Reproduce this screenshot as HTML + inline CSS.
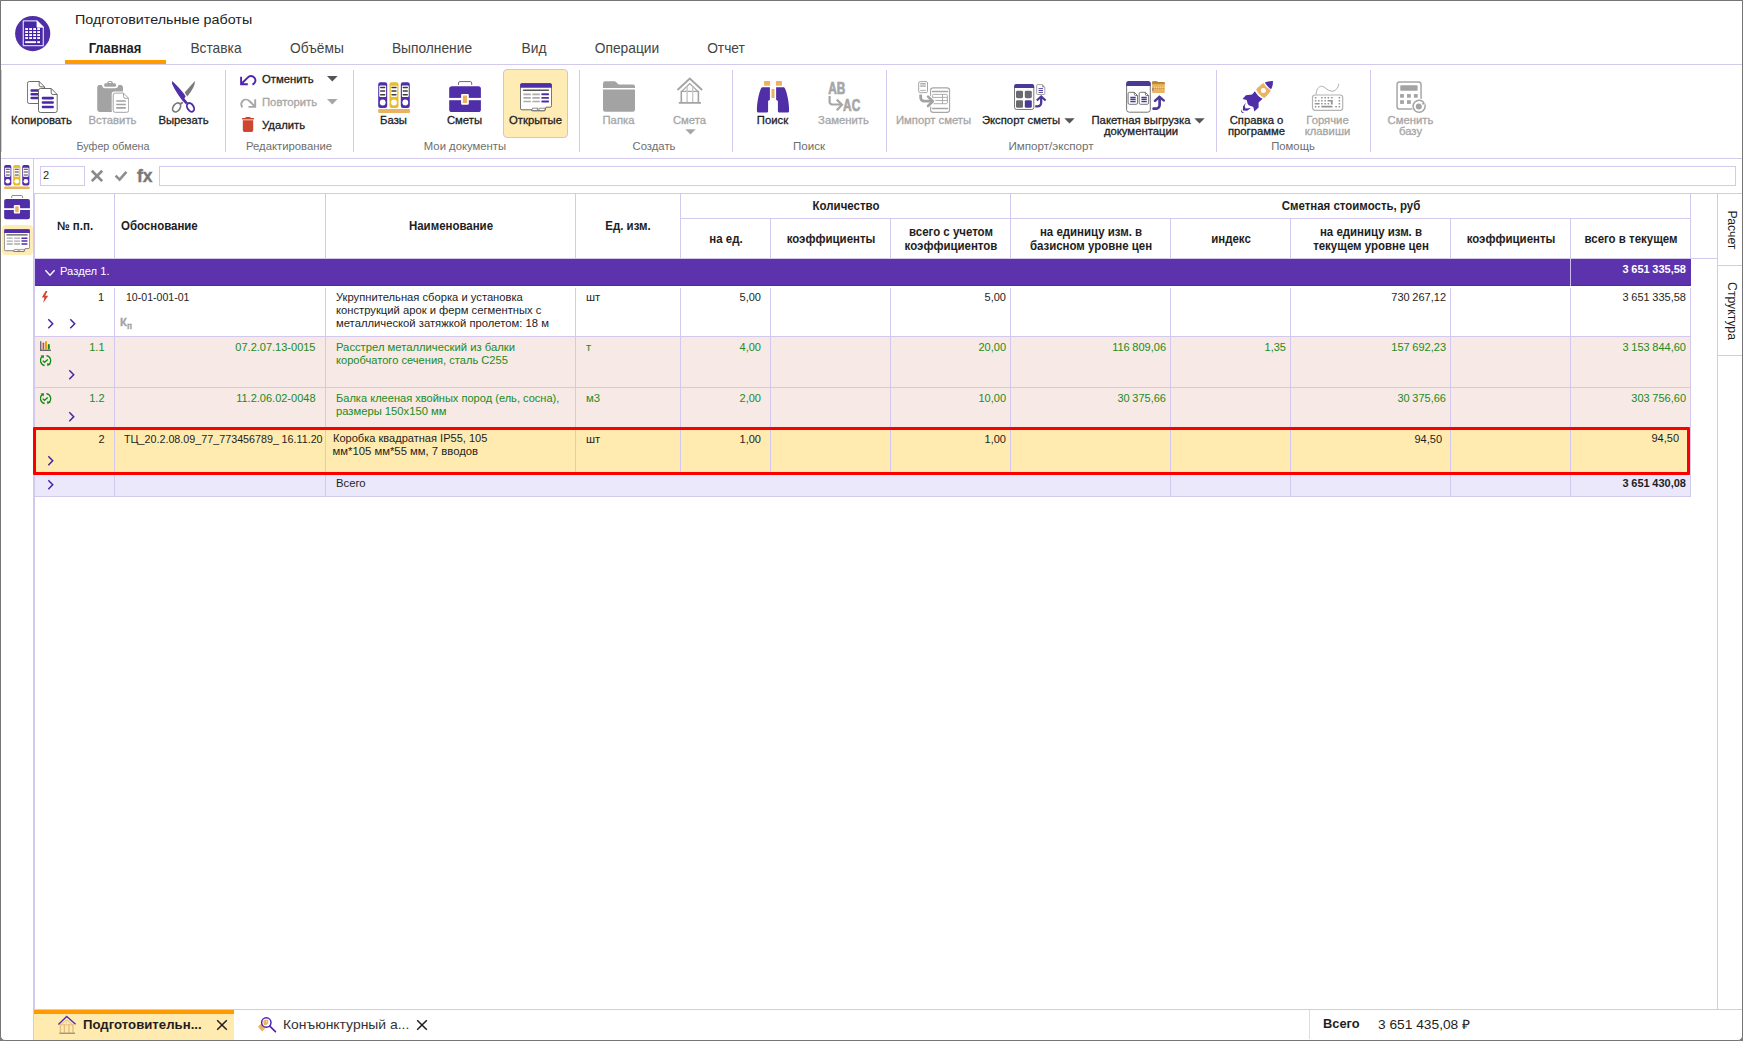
<!DOCTYPE html>
<html lang="ru">
<head>
<meta charset="utf-8">
<title>Подготовительные работы</title>
<style>
html,body{margin:0;padding:0;background:#7b7a78;}
body{width:1743px;height:1041px;overflow:hidden;font-family:"Liberation Sans",sans-serif;color:#1e1e1e;}
#win{position:absolute;left:0;top:0;width:1741px;height:1039px;border:1px solid #757575;border-radius:0 0 5px 5px;background:#fff;overflow:hidden;}
.abs{position:absolute;}
.t{position:absolute;white-space:nowrap;line-height:1;transform-origin:0 0;transform:scaleX(var(--sx,1));}
.t.cx{transform-origin:50% 0;transform:translateX(-50%) scaleX(var(--sx,1));}
.t.r{transform-origin:100% 0;transform:translateX(-100%) scaleX(var(--sx,1));}
.hl{position:absolute;height:1px;background:#d3c8ee;}
.vl{position:absolute;width:1px;background:#d3c8ee;}
#o{position:absolute;left:-1px;top:-1px;width:1743px;height:1041px;}
#title{left:75px;top:13px;font-size:13.5px;color:#222;--sx:1.06;}
.tab{font-size:14.5px;color:#444;top:41px;--sx:.95;}
.tab.act{font-weight:bold;color:#1e1e1e;--sx:.893;}
.rl{font-size:11.3px;color:#6e6e6e;top:141px;}
.bl{font-size:11.3px;color:#1e1e1e;-webkit-text-stroke:0.3px currentColor;text-align:center;line-height:11px;top:114.5px;--sx:1;}
.bl.dis{color:#a6a6a6;}
.sl{font-size:11.3px;-webkit-text-stroke:0.3px currentColor;color:#1e1e1e;--sx:1;}
.sl.dis{color:#a6a6a6;}
.ic{position:absolute;}
.th{font-size:12px;font-weight:bold;color:#1e1e1e;text-align:center;line-height:14px;--sx:.955;transform-origin:50% 50%;transform:translate(-50%,-50%) scaleX(var(--sx,1));}
.th.l{transform-origin:0 50%;transform:translate(0,-50%) scaleX(var(--sx,1));}
.c{font-size:11.3px;line-height:13px;}
.n{font-size:11px;line-height:13px;word-spacing:-0.4px;}
.g{color:#228b22;}
</style>
</head>
<body>
<div id="win"><div id="o">

<!-- ===== title / tabs ===== -->
<div class="abs" id="logo" style="left:15px;top:16px;width:36px;height:36px;">
<svg width="36" height="36" viewBox="0 0 36 36"><circle cx="17.700" cy="17.600" r="17.600" fill="#4f2ea8"/><path d="M8.300 4.900H22l6.300 6.300V29.700H8.300z" fill="#4527a4" stroke="#d6cdf0" stroke-width="1.300" stroke-linejoin="round"/><path d="M22 4.900v6.300h6.300z" fill="#fff" stroke="#fff" stroke-width="0.800" stroke-linejoin="round"/><g fill="#fff"><rect x="10.2" y="12.1" width="2.8" height="1.900"/><rect x="14.2" y="12.1" width="2.8" height="1.900"/><rect x="18.2" y="12.1" width="2.8" height="1.900"/><rect x="22.2" y="12.1" width="2.8" height="1.900"/><rect x="10.2" y="15.1" width="2.8" height="1.900"/><rect x="14.2" y="15.1" width="2.8" height="1.900"/><rect x="18.2" y="15.1" width="2.8" height="1.900"/><rect x="22.2" y="15.1" width="2.8" height="1.900"/><rect x="10.2" y="18.1" width="2.8" height="1.900"/><rect x="14.2" y="18.1" width="2.8" height="1.900"/><rect x="18.2" y="18.1" width="2.8" height="1.900"/><rect x="22.2" y="18.1" width="2.8" height="1.900"/><rect x="10.2" y="21.1" width="2.8" height="1.900"/><rect x="14.2" y="21.1" width="2.8" height="1.900"/><rect x="18.2" y="21.1" width="2.8" height="1.900"/><rect x="22.2" y="21.1" width="2.8" height="1.900"/><rect x="10.200" y="25.200" width="10.800" height="1.900"/><rect x="22.200" y="25.200" width="2.800" height="1.900"/></g></svg>
</div>
<div class="t" id="title">Подготовительные работы</div>
<div class="t cx tab act" style="left:115px;">Главная</div>
<div class="t cx tab" style="left:216px;">Вставка</div>
<div class="t cx tab" style="left:317px;">Объёмы</div>
<div class="t cx tab" style="left:432px;">Выполнение</div>
<div class="t cx tab" style="left:534px;">Вид</div>
<div class="t cx tab" style="left:627px;">Операции</div>
<div class="t cx tab" style="left:726px;">Отчет</div>
<div class="abs" style="left:65px;top:60px;width:101px;height:4px;background:#ff9a00;"></div>
<div class="hl" style="left:1px;top:64px;width:1741px;"></div>

<!-- ===== ribbon ===== -->
<div id="ribbon">
<div class="vl" style="left:1px;top:70px;height:82px;"></div>
<div class="vl" style="left:225px;top:70px;height:82px;"></div>
<div class="vl" style="left:353px;top:70px;height:82px;"></div>
<div class="vl" style="left:579px;top:70px;height:82px;"></div>
<div class="vl" style="left:732px;top:70px;height:82px;"></div>
<div class="vl" style="left:886px;top:70px;height:82px;"></div>
<div class="vl" style="left:1216px;top:70px;height:82px;"></div>
<div class="vl" style="left:1370px;top:70px;height:82px;"></div>
<!-- group 1 -->
<svg class="ic" style="left:27px;top:81px" width="32" height="32" viewBox="0 0 32 32">
<path d="M2.400 0.500h9.800l5.400 5.400v14.600a2 2 0 0 1-2 2H2.400a2 2 0 0 1-2-2V2.500a2 2 0 0 1 2-2z" fill="#fff" stroke="#5a5a5a" stroke-width="0.900"/>
<path d="M12.200 0.600v3.500a1.800 1.800 0 0 0 1.800 1.800h3.500" fill="none" stroke="#5a5a5a" stroke-width="0.900"/>
<g stroke="#4a28a6" stroke-width="2.500" stroke-linecap="round"><path d="M4.600 9.400h7M4.600 13.300h7M4.600 17.100h7"/></g>
<path d="M13.500 7.500h10.700l6 6v16a2 2 0 0 1-2 2H13.500a2 2 0 0 1-2-2V9.500a2 2 0 0 1 2-2z" fill="#fff" stroke="#5a5a5a" stroke-width="0.900"/>
<path d="M24.200 7.600v4a1.900 1.900 0 0 0 1.900 1.900h4" fill="none" stroke="#5a5a5a" stroke-width="0.900"/>
<g stroke="#4a28a6" stroke-width="2.700" stroke-linecap="round"><path d="M16 17.100h9.600M16 21.500h9.600M16 26h9.600"/></g>
</svg>
<div class="t cx bl" style="left:41.5px;">Копировать</div>

<svg class="ic" style="left:97px;top:81px" width="32" height="32" viewBox="0 0 32 32">
<path d="M2.600 4H4.800C5.400 6 6.400 7.300 8 7.300H18.400C20 7.300 21 6 21.500 4H23.600a2.400 2.400 0 0 1 2.400 2.400V28.600a2.400 2.400 0 0 1-2.400 2.400H2.600a2.400 2.400 0 0 1-2.400-2.400V6.400a2.400 2.400 0 0 1 2.400-2.400z" fill="#a3a3a3"/>
<path d="M8.600 2.200h1.600c.4-1.400 1-2.200 2-2.200h1.800c1 0 1.600.8 2 2.200h1.600a1.500 1.500 0 0 1 1.500 1.500v.6a1.500 1.500 0 0 1-1.500 1.500H8.600a1.500 1.500 0 0 1-1.500-1.500v-.6a1.500 1.500 0 0 1 1.500-1.500z" fill="#a3a3a3"/>
<rect x="11.700" y="1" width="2.600" height="1.100" rx="0.500" fill="#fff"/>
<rect x="14.700" y="10.500" width="17.300" height="21.500" rx="2.800" fill="#fff"/>
<path d="M18.200 12.100h8.300l5.200 5.200v12a2 2 0 0 1-2 2H18.200a2 2 0 0 1-2-2V14.100a2 2 0 0 1 2-2z" fill="#fff" stroke="#a3a3a3" stroke-width="1"/>
<path d="M26.500 12.200v3.400a1.700 1.700 0 0 0 1.700 1.700h3.400" fill="none" stroke="#a3a3a3" stroke-width="1"/>
<g stroke="#a3a3a3" stroke-width="1.700"><path d="M19.200 20h9.600M19.200 23.500h9.600M19.200 26.900h9.600"/></g>
</svg>
<div class="t cx bl dis" style="left:112.5px;">Вставить</div>

<svg class="ic" style="left:167px;top:81px" width="32" height="32" viewBox="0 0 32 32">
<path d="M27.800 0.100C28.400 3.600 25 10.200 20.200 15.400L17.700 11.600z" fill="#7a7a7a"/>
<path d="M5.200 0L9.500 4.200 13.400 8.500 17.200 13.100 18.600 15.400 17.400 17.600 20.800 21.600 18.800 23.200 14.900 18.900 11.500 14.200 7.600 8.100 5 2.700z" fill="#4f2ea8"/>
<ellipse cx="9.600" cy="26.400" rx="3.400" ry="4.900" transform="rotate(36 9.600 26.400)" fill="none" stroke="#7a7a7a" stroke-width="1.700"/>
<path d="M12.400 22.500l2.800-2.100 1.100 1.500-2.500 2z" fill="#7a7a7a"/>
<ellipse cx="23.500" cy="26.400" rx="3.100" ry="4.700" transform="rotate(-32 23.500 26.400)" fill="none" stroke="#4f2ea8" stroke-width="1.900"/>
</svg>
<div class="t cx bl" style="left:183.500px;">Вырезать</div>
<div class="t cx rl" style="left:112.700px;--sx:.952;">Буфер обмена</div>

<!-- group 2 -->
<svg class="ic" style="left:239px;top:73px" width="18" height="14" viewBox="0 0 18 14">
<path d="M2.100 3.800V11.200H8.800M2.300 11L8.900 4.400" fill="none" stroke="#4a25b0" stroke-width="1.900"/>
<path d="M8.700 4.600A4.350 4.350 0 1 1 13.400 11.500" fill="none" stroke="#4a25b0" stroke-width="1.900"/>
</svg>
<div class="t sl" style="left:262px;top:74px;">Отменить</div>
<svg class="ic" style="left:327px;top:76px" width="11" height="6" viewBox="0 0 11 6"><path d="M0 0.100h10.600L5.300 5.400z" fill="#555"/></svg>

<svg class="ic" style="left:239px;top:96px" width="18" height="14" viewBox="0 0 18 14">
<path d="M16.200 3.300V10.900H9.500M16 10.700L10.400 5" fill="none" stroke="#a6a6a6" stroke-width="1.900"/>
<path d="M10.400 5.200A4.400 4.400 0 1 0 3.400 11.300" fill="none" stroke="#a6a6a6" stroke-width="1.900"/>
</svg>
<div class="t sl dis" style="left:262px;top:97px;">Повторить</div>
<svg class="ic" style="left:327px;top:99px" width="11" height="6" viewBox="0 0 11 6"><path d="M0 0.100h10.600L5.300 5.400z" fill="#a6a6a6"/></svg>

<svg class="ic" style="left:241px;top:117px" width="14" height="15" viewBox="0 0 14 15">
<path d="M1.100 0.900h3l.8-.8h4.200l.8.800h3v1.600H1.100z" fill="#cd4630"/>
<path d="M1.800 3.200h10.400v10a1.700 1.700 0 0 1-1.700 1.700H3.500a1.700 1.700 0 0 1-1.700-1.700z" fill="#cd4630"/>
</svg>
<div class="t sl" style="left:262px;top:120px;">Удалить</div>
<div class="t cx rl" style="left:289px;">Редактирование</div>

<!-- group 3: Мои документы -->
<svg class="ic" style="left:378px;top:81px" width="33" height="32" viewBox="0 0 33 32">
<g transform="translate(0 0)">
<rect x="0.200" y="1.200" width="9" height="25.700" rx="2.200" fill="#4f2ea8"/>
<rect x="1.300" y="4.600" width="6.800" height="11.400" rx="1" fill="#fff"/>
<rect x="1.800" y="4.900" width="5.800" height="10.800" rx="0.800" fill="#fff"/>
<path d="M2.700 6.500h4M2.700 10h4M2.700 13.700h4" stroke="#3c3c3c" stroke-width="1.400" stroke-linecap="round"/>
<circle cx="4.700" cy="21.500" r="2.900" fill="#fff"/>
</g>
<g transform="translate(11.3 0)">
<rect x="0.200" y="1.200" width="9" height="25.700" rx="2.200" fill="#e8bd27"/>
<rect x="1.300" y="4.600" width="6.800" height="11.400" rx="1" fill="#f5e08c"/>
<rect x="1.800" y="4.900" width="5.800" height="10.800" rx="0.800" fill="#fff"/>
<path d="M2.700 6.500h4M2.700 10h4M2.700 13.700h4" stroke="#3c3c3c" stroke-width="1.400" stroke-linecap="round"/>
<circle cx="4.700" cy="21.500" r="2.900" fill="#fff"/>
</g>
<g transform="translate(22.6 0)">
<rect x="0.200" y="1.200" width="9" height="25.700" rx="2.200" fill="#4f2ea8"/>
<rect x="1.300" y="4.600" width="6.800" height="11.400" rx="1" fill="#fff"/>
<rect x="1.800" y="4.900" width="5.800" height="10.800" rx="0.800" fill="#fff"/>
<path d="M2.700 6.500h4M2.700 10h4M2.700 13.700h4" stroke="#3c3c3c" stroke-width="1.400" stroke-linecap="round"/>
<circle cx="4.700" cy="21.500" r="2.900" fill="#fff"/>
</g>
<rect x="0.200" y="28.100" width="31.800" height="3.800" rx="1" fill="#e9b361"/>
</svg>
<div class="t cx bl" style="left:393.500px;">Базы</div>

<svg class="ic" style="left:449px;top:81px" width="32" height="32" viewBox="0 0 32 32">
<path d="M9.500 3.900V2a1.400 1.400 0 0 1 1.400-1.400h10.400a1.400 1.400 0 0 1 1.400 1.400v1.900" fill="none" stroke="#6a6a6a" stroke-width="1"/>
<rect x="0.200" y="5.200" width="31.700" height="25.800" rx="2.600" fill="#4f2ea8"/>
<rect x="0" y="16.900" width="32" height="2.300" fill="#fff"/>
<rect x="12.100" y="12.900" width="7.700" height="10.800" rx="1.200" fill="#fff"/>
<rect x="13.800" y="14.400" width="4.300" height="7.600" rx="0.500" fill="#e9b361"/>
</svg>
<div class="t cx bl" style="left:464.500px;">Сметы</div>

<div class="abs" style="left:503px;top:69px;width:63px;height:67px;border:1px solid #cdc1ee;border-radius:4px;background:#ffecb5;"></div>
<svg class="ic" style="left:520px;top:83px" width="32" height="29" viewBox="0 0 32 29">
<path d="M2 0.600h28a1.600 1.600 0 0 1 1.600 1.600V22.600a1.600 1.600 0 0 1-1.600 1.600h-4l-1.200 3.600H12.600l-.6-1H2A1.600 1.600 0 0 1 .4 25.200V2.200A1.600 1.600 0 0 1 2 .6z" fill="#fff" stroke="#5a5a5a" stroke-width="0.900"/>
<path d="M2 0.200h28a1.800 1.800 0 0 1 1.800 1.800v2.800H.2V2A1.800 1.800 0 0 1 2 .2z" fill="#4f2ea8"/>
<path d="M3.600 7.300h24.800" stroke="#555" stroke-width="1.500" stroke-linecap="round"/>
<g stroke="#ababab" stroke-width="1.700"><path d="M3.400 11.300h7.400M12.400 11.300h7.400M3.400 14.900h7.400M12.400 14.900h7.400M3.400 18.500h7.400M12.400 18.500h7.400"/></g>
<g stroke="#4f2ea8" stroke-width="1.900" stroke-linecap="round"><path d="M22.200 11.300h6M22.200 14.900h6M22.200 18.500h6"/></g>
<path d="M11.600 27.600l1-2.400h5.400l-.8 2.400zM18.600 27.600l.8-2.400h6l-1 2.400z" fill="#fff" stroke="#5a5a5a" stroke-width="0.700"/>
</svg>
<div class="t cx bl" style="left:535.500px;">Открытые</div>
<div class="t cx rl" style="left:465px;">Мои документы</div>

<!-- group 4: Создать -->
<svg class="ic" style="left:603px;top:81px" width="32" height="31" viewBox="0 0 32 31">
<path d="M0 2.400A2.200 2.200 0 0 1 2.200 .2h8.600c1.400 0 2.200.6 3.200 1.800s1.600 1.600 3 1.600H30a2 2 0 0 1 2 2V6.900H0z" fill="#a3a3a3"/>
<path d="M0 8.500h32v20a2.200 2.200 0 0 1-2.200 2.200H2.200A2.200 2.200 0 0 1 0 28.500z" fill="#a3a3a3"/>
</svg>
<div class="t cx bl dis" style="left:618.500px;">Папка</div>

<svg class="ic" style="left:676px;top:77px" width="28" height="28" viewBox="0 0 28 28">
<path d="M1.500 13L13.800 1.500 26.100 13" fill="none" stroke="#a3a3a3" stroke-width="1.800"/>
<path d="M5.400 14.600L13.800 6.600l8.400 8" fill="none" stroke="#a3a3a3" stroke-width="1.300"/>
<path d="M5 14.400h17.600" stroke="#a3a3a3" stroke-width="1.300"/>
<path d="M5.300 14v11.400M22.400 14v11.400" stroke="#a3a3a3" stroke-width="1.600"/>
<path d="M11.100 9.600v15.600M16.700 9.600v15.600" stroke="#c9c9c9" stroke-width="1.500"/>
<path d="M2.800 25.900h22.200" stroke="#a3a3a3" stroke-width="1.800"/>
</svg>
<div class="t cx bl dis" style="left:689.500px;">Смета</div>
<svg class="ic" style="left:685px;top:129px" width="11" height="6" viewBox="0 0 11 6"><path d="M0.300 0.200h10.400L5.500 5.400z" fill="#a6a6a6"/></svg>
<div class="t cx rl" style="left:654px;">Создать</div>

<!-- group 5: Поиск -->
<svg class="ic" style="left:756px;top:81px" width="34" height="32" viewBox="0 0 34 32">
<rect x="8.100" y="0" width="6" height="4.700" fill="#e9b361"/>
<rect x="19.900" y="0" width="6" height="4.700" fill="#e9b361"/>
<rect x="15.500" y="8" width="3" height="9" fill="#e9b361"/>
<path d="M6.800 6.200h7.100V18.800l-1.800 1.100V30a1.500 1.500 0 0 1-1.500 1.500H2.400A1.500 1.500 0 0 1 .9 30C.9 21 2.800 12.600 5 7.600c.4-.9 1-1.400 1.800-1.400z" fill="#4f2ea8"/>
<path d="M27.200 6.200h-7.100V18.800l1.800 1.100V30a1.500 1.500 0 0 0 1.500 1.500h8.200a1.500 1.500 0 0 0 1.500-1.500C33.100 21 31.200 12.600 29 7.600c-.4-.9-1-1.400-1.800-1.400z" fill="#4f2ea8"/>
</svg>
<div class="t cx bl" style="left:772.500px;">Поиск</div>

<svg class="ic" style="left:827px;top:81px" width="36" height="32" viewBox="0 0 36 32">
<text transform="translate(1.300 12.700) scale(0.730 1)" font-family="Liberation Sans, sans-serif" font-weight="bold" font-size="16.200" fill="#a6a6a6" stroke="#a6a6a6" stroke-width="0.700">AB</text>
<text transform="translate(16.100 29.700) scale(0.730 1)" font-family="Liberation Sans, sans-serif" font-weight="bold" font-size="16.200" fill="#a6a6a6" stroke="#a6a6a6" stroke-width="0.700">AC</text>
<path d="M2.600 15V20.800a2.700 2.700 0 0 0 2.700 2.700h9.200" fill="none" stroke="#a6a6a6" stroke-width="2.200"/>
<path d="M9.800 18.600l5.200 5.200-5.200 5.400" fill="none" stroke="#a6a6a6" stroke-width="2.200"/>
</svg>
<div class="t cx bl dis" style="left:843.500px;">Заменить</div>
<div class="t cx rl" style="left:809px;--sx:1.025;">Поиск</div>

<!-- group 6: Импорт/экспорт -->
<svg class="ic" style="left:917px;top:81px" width="34" height="32" viewBox="0 0 34 32">
<rect x="1.700" y="0.600" width="8.800" height="11" rx="1.400" fill="#fff" stroke="#a6a6a6" stroke-width="1"/>
<rect x="3.200" y="2.800" width="5.600" height="2.200" fill="#d4d4d4"/>
<path d="M3.200 2.500h5.600M3.200 5.300h5.600M3.200 9.400h5.600" stroke="#a6a6a6" stroke-width="0.900"/>
<rect x="13.600" y="6.900" width="19" height="24.500" rx="2.600" fill="#fff" stroke="#a6a6a6" stroke-width="1.100"/>
<path d="M15.600 10.600h15M15.600 27.500h15" stroke="#a6a6a6" stroke-width="1.500" stroke-linecap="round"/>
<rect x="15.600" y="13.400" width="14.800" height="9.300" rx="1.200" fill="none" stroke="#a6a6a6" stroke-width="0.900"/>
<path d="M15.600 16.400h14.800M17.600 19.500h12.800M25.500 13.400v9.300" stroke="#a6a6a6" stroke-width="0.900"/>
<path d="M3.700 13.400v3.400a3.400 3.400 0 0 0 3.400 3.400h8.600" fill="none" stroke="#fff" stroke-width="4.600"/>
<path d="M11 15.600l4.900 4.600-4.900 4.800" fill="none" stroke="#fff" stroke-width="4.400" stroke-linecap="round"/>
<path d="M3.700 13.400v3.400a3.400 3.400 0 0 0 3.400 3.400h8" fill="none" stroke="#a3a3a3" stroke-width="2.800"/>
<path d="M11 15.600l4.900 4.600-4.900 4.800" fill="none" stroke="#a3a3a3" stroke-width="2.600" stroke-linecap="round" stroke-linejoin="round"/>
</svg>
<div class="t cx bl dis" style="left:933.500px;">Импорт сметы</div>

<svg class="ic" style="left:1014px;top:84px" width="33" height="26" viewBox="0 0 33 26">
<rect x="0.500" y="0.500" width="19.300" height="25" rx="2" fill="#fff" stroke="#6a6a6a" stroke-width="0.900"/>
<path d="M2.400 0.100h15.500a2.200 2.200 0 0 1 2.200 2.200v1.600H.2V2.300A2.200 2.200 0 0 1 2.400 .1z" fill="#4c3897"/>
<rect x="2" y="6.800" width="7" height="7.400" rx="1.400" fill="#6b6a70"/>
<rect x="10.800" y="6.800" width="7" height="7.400" rx="1.400" fill="#6b6a70"/>
<rect x="2" y="16.200" width="7" height="7.600" rx="1.400" fill="#6b6a70"/>
<rect x="10.800" y="16.200" width="7" height="7.600" rx="1.400" fill="#4c3897"/>
<path d="M23.600 0.600h4.600l2.600 2.600v6.400a.9.900 0 0 1-.9.900h-6.300a.9.900 0 0 1-.9-.9V1.500a.9.900 0 0 1 .9-.9z" fill="#fff" stroke="#8a8a8a" stroke-width="0.800"/>
<path d="M28.200 0.600v2.600h2.600z" fill="#8a8a8a"/>
<path d="M24.600 4.600h4.400M24.600 6.500h4.400M24.600 8.400h4.400" stroke="#5a46a8" stroke-width="1"/>
<path d="M21.200 22.400h2.400a3.600 3.600 0 0 0 3.600-3.600V13.500" fill="none" stroke="#4c3897" stroke-width="2.300"/>
<path d="M22.800 16.600l4.400-4.200 4.400 4.200" fill="none" stroke="#4c3897" stroke-width="2.100"/>
</svg>
<div class="t cx bl" style="left:1021px;">Экспорт сметы</div>
<svg class="ic" style="left:1064px;top:118px" width="11" height="6" viewBox="0 0 11 6"><path d="M0.300 0.200h10.400L5.500 5.400z" fill="#555"/></svg>

<svg class="ic" style="left:1126px;top:81px" width="40" height="32" viewBox="0 0 40 32">
<rect x="0.600" y="0.500" width="23.700" height="30.700" rx="2.600" fill="#fff" stroke="#666" stroke-width="0.900"/>
<path d="M2.800 0.100h19.300a2.600 2.600 0 0 1 2.600 2.600v2.200H.2V2.700A2.600 2.600 0 0 1 2.800 .1z" fill="#4c3897"/>
<path d="M3.5 11.300h4.800l3.200 3.200v7.400a1.400 1.400 0 0 1-1.400 1.400H3.5a1.400 1.400 0 0 1-1.400-1.400V12.700a1.400 1.400 0 0 1 1.400-1.400z" fill="#fff" stroke="#666" stroke-width="0.900"/>
<path d="M8.3 11.400v1.800a1.300 1.300 0 0 0 1.300 1.300h1.800" fill="none" stroke="#666" stroke-width="0.900"/>
<path d="M4.300000000000001 16.500h5.400M4.300000000000001 18.500h5.400M4.300000000000001 20.600h5.400" stroke="#4c3897" stroke-width="1.300"/>
<path d="M14.6 11.300h4.800l3.200 3.200v7.400a1.400 1.400 0 0 1-1.400 1.400H14.6a1.400 1.400 0 0 1-1.400-1.400V12.700a1.400 1.400 0 0 1 1.400-1.400z" fill="#fff" stroke="#666" stroke-width="0.900"/>
<path d="M19.4 11.400v1.800a1.300 1.300 0 0 0 1.300 1.300h1.800" fill="none" stroke="#666" stroke-width="0.900"/>
<path d="M15.399999999999999 16.500h5.400M15.399999999999999 18.500h5.400M15.399999999999999 20.600h5.400" stroke="#4c3897" stroke-width="1.300"/>
<path d="M26.100 1.400a1.200 1.200 0 0 1 1.200-1.200h3c.8 0 1.200.4 1.600.9h5.800a1.100 1.100 0 0 1 1.100 1.100V11a.9.900 0 0 1-.9.900H27a.9.900 0 0 1-.9-.9z" fill="#ebb560"/>
<path d="M26.100 1.400a1.200 1.200 0 0 1 1.200-1.200h3c.8 0 1.200.4 1.600.9h5.800a1.100 1.100 0 0 1 1.100 1.100v.9H26.100z" fill="#b08430"/>
<path d="M26.100 3.100h12.700" stroke="#d9a64e" stroke-width="0.800"/>
<path d="M26.300 6.500h12.400" stroke="#f5f0e6" stroke-width="0.800" stroke-dasharray="0.900 1.100"/>
<path d="M27.300 7.300h11.400" stroke="#7d7d86" stroke-width="0.800" stroke-dasharray="0.900 1.100"/>
<rect x="26.100" y="6.600" width="1.400" height="3.200" fill="#8a8a92"/>
<path d="M27.600 27.700h2.200a3.800 3.800 0 0 0 3.800-3.800V16.600" fill="none" stroke="#4c3897" stroke-width="2.700" stroke-linecap="round"/>
<path d="M29 19.800L33.400 15.800 37.700 19.400" fill="none" stroke="#4c3897" stroke-width="2.500" stroke-linecap="round" stroke-linejoin="miter"/>
</svg>
<div class="t cx bl" style="left:1141px;">Пакетная выгрузка<br>документации</div>
<svg class="ic" style="left:1194px;top:118px" width="11" height="6" viewBox="0 0 11 6"><path d="M0.300 0.200h10.400L5.500 5.400z" fill="#555"/></svg>
<div class="t cx rl" style="left:1050.800px;--sx:1.028;">Импорт/экспорт</div>

<!-- group 7: Помощь -->
<svg class="ic" style="left:1240px;top:80px" width="34" height="34" viewBox="0 0 34 34">
<path d="M32.900 .9C30 .8 27 1.500 24.800 2.500 26.400 5.400 28.600 7.700 31.100 9.200 32.600 6.800 33.100 3.800 32.900 .9z" fill="#4f2ea8"/>
<path d="M23.600 3.100C20.800 4.800 18.200 7 16.100 9.500 17.800 13.200 20.800 16.200 24.400 17.900 27 15.800 29.200 13.200 30.900 10.200 28 8.800 25.200 6.200 23.600 3.100z" fill="#e9b361"/>
<circle cx="23.400" cy="10.400" r="2.500" fill="#fff"/>
<path d="M14.900 11.200C16.600 14.400 19.400 17.200 22.600 18.700L18.600 22.500V27.500L14.400 31.400 13.200 26.700C11.800 26.600 10.400 26.200 9.400 25.600 8.200 24.800 7.500 23.700 7.300 22.500L6.700 20 2.500 19.100 5.900 15.200 12.100 14.400z" fill="#4f2ea8"/>
<path d="M5.900 22.500L4.700 26 5.500 28.400 11 27.900 7.200 30.700 2.900 30.500 3 26.400z" fill="#4f2ea8"/>
<path d="M1.300 29C.8 30.600 1 32 1.700 32.600 2.600 33.200 3.800 33.200 4.800 32.900 3.400 32.600 2.400 32 1.900 31.200 1.500 30.600 1.300 29.800 1.300 29z" fill="#4f2ea8"/>
</svg>
<div class="t cx bl" style="left:1256.500px;">Справка о<br>программе</div>

<svg class="ic" style="left:1311px;top:82px" width="33" height="29" viewBox="0 0 33 29">
<path d="M5 12.800C5.200 8 7.400 4.200 10.500 4.200c3.300 0 5.500 4.600 10.200 5 3.400.2 6.400-2.600 7.100-7.500" fill="none" stroke="#a6a6a6" stroke-width="0.900"/>
<rect x="1.500" y="13" width="30.200" height="15.400" rx="2.600" fill="#fff" stroke="#b4b4b4" stroke-width="1.200"/>
<g fill="#959595"><rect x="3.75" y="14.95" width="1.7" height="1.5" rx="0.4"/><rect x="10.05" y="14.95" width="1.7" height="1.5" rx="0.4"/><rect x="13.35" y="14.95" width="1.7" height="1.5" rx="0.4"/><rect x="16.55" y="14.95" width="1.7" height="1.5" rx="0.4"/><rect x="20.05" y="14.95" width="1.7" height="1.5" rx="0.4"/><rect x="27.55" y="14.95" width="1.7" height="1.5" rx="0.4"/><rect x="3.75" y="18.05" width="1.7" height="1.5" rx="0.4"/><rect x="6.95" y="18.05" width="1.7" height="1.5" rx="0.4"/><rect x="10.05" y="18.05" width="1.7" height="1.5" rx="0.4"/><rect x="13.35" y="18.05" width="1.7" height="1.5" rx="0.4"/><rect x="27.55" y="18.05" width="1.7" height="1.5" rx="0.4"/><rect x="10.05" y="20.95" width="1.7" height="1.5" rx="0.4"/><rect x="13.35" y="20.95" width="1.7" height="1.5" rx="0.4"/><rect x="16.55" y="20.95" width="1.7" height="1.5" rx="0.4"/><rect x="27.55" y="20.95" width="1.7" height="1.5" rx="0.4"/><rect x="3.75" y="23.95" width="1.7" height="1.5" rx="0.4"/><rect x="6.95" y="23.95" width="1.7" height="1.5" rx="0.4"/><rect x="24.25" y="23.95" width="1.7" height="1.5" rx="0.4"/><rect x="27.55" y="23.95" width="1.7" height="1.5" rx="0.4"/><rect x="3.600" y="20.900" width="5.200" height="1.600" rx="0.800"/><rect x="10.200" y="23.800" width="11.400" height="1.800" rx="0.900"/><path d="M16.600 18h5.100v4.600h-1.800v-3h-3.300z"/></g>
</svg>
<div class="t cx bl dis" style="left:1327.500px;">Горячие<br>клавиши</div>
<div class="t cx rl" style="left:1293px;">Помощь</div>

<!-- group 8 -->
<svg class="ic" style="left:1396px;top:81px" width="32" height="32" viewBox="0 0 32 32">
<rect x="1.050" y="0.950" width="24" height="27.100" rx="2.600" fill="#fff" stroke="#a6a6a6" stroke-width="1.500"/>
<rect x="4.300" y="4.200" width="17.300" height="5.600" rx="0.900" fill="#a3a3a3"/>
<g fill="#a3a3a3"><rect x="4.100" y="13.100" width="3.800" height="3.600"/><rect x="11" y="13.100" width="3.800" height="3.600"/><rect x="17.900" y="13.100" width="3.800" height="3.600"/><rect x="4.100" y="19.200" width="3.800" height="3.700"/><rect x="11" y="19.200" width="3.800" height="3.700"/></g>
<circle cx="23.100" cy="25.200" r="7.600" fill="#fff"/>
<circle cx="23.100" cy="25.200" r="6" fill="none" stroke="#a3a3a3" stroke-width="1.500"/>
<circle cx="22.800" cy="25.400" r="3" fill="#a3a3a3"/>
<path d="M24.600 23.600l1.400-1.800 2.600-.2.400 2.400-2.200 1z" fill="#fff"/>
<path d="M27.800 20.400l.9 3.400-3.200-.6z" fill="#a3a3a3"/>
</svg>
<div class="t cx bl dis" style="left:1410.500px;">Сменить<br>базу</div>

</div>
<div class="hl" style="left:1px;top:158px;width:1741px;"></div>

<!-- ===== left sidebar ===== -->
<div class="vl" style="left:33px;top:159px;height:881px;"></div>
<svg class="ic" style="left:4px;top:163.5px" width="26.4" height="25.6" preserveAspectRatio="none" viewBox="0 0 33 32">
<g transform="translate(0 0)">
<rect x="0.200" y="1.200" width="9" height="25.700" rx="2.200" fill="#4f2ea8"/>
<rect x="1.300" y="4.600" width="6.800" height="11.400" rx="1" fill="#fff"/>
<rect x="1.800" y="4.900" width="5.800" height="10.800" rx="0.800" fill="#fff"/>
<path d="M2.700 6.500h4M2.700 10h4M2.700 13.700h4" stroke="#3c3c3c" stroke-width="1.400" stroke-linecap="round"/>
<circle cx="4.700" cy="21.500" r="2.900" fill="#fff"/>
</g>
<g transform="translate(11.3 0)">
<rect x="0.200" y="1.200" width="9" height="25.700" rx="2.200" fill="#e8bd27"/>
<rect x="1.300" y="4.600" width="6.800" height="11.400" rx="1" fill="#f5e08c"/>
<rect x="1.800" y="4.900" width="5.800" height="10.800" rx="0.800" fill="#fff"/>
<path d="M2.700 6.500h4M2.700 10h4M2.700 13.700h4" stroke="#3c3c3c" stroke-width="1.400" stroke-linecap="round"/>
<circle cx="4.700" cy="21.500" r="2.900" fill="#fff"/>
</g>
<g transform="translate(22.6 0)">
<rect x="0.200" y="1.200" width="9" height="25.700" rx="2.200" fill="#4f2ea8"/>
<rect x="1.300" y="4.600" width="6.800" height="11.400" rx="1" fill="#fff"/>
<rect x="1.800" y="4.900" width="5.800" height="10.800" rx="0.800" fill="#fff"/>
<path d="M2.700 6.500h4M2.700 10h4M2.700 13.700h4" stroke="#3c3c3c" stroke-width="1.400" stroke-linecap="round"/>
<circle cx="4.700" cy="21.500" r="2.900" fill="#fff"/>
</g>
<rect x="0.200" y="28.100" width="31.800" height="3.800" rx="1" fill="#e9b361"/>
</svg>
<svg class="ic" style="left:4px;top:195px" width="26" height="25" preserveAspectRatio="none" viewBox="0 0 32 32">
<path d="M9.500 3.900V2a1.400 1.400 0 0 1 1.400-1.400h10.400a1.400 1.400 0 0 1 1.400 1.400v1.900" fill="none" stroke="#6a6a6a" stroke-width="1"/>
<rect x="0.200" y="5.200" width="31.700" height="25.800" rx="2.600" fill="#4f2ea8"/>
<rect x="0" y="16.900" width="32" height="2.300" fill="#fff"/>
<rect x="12.100" y="12.900" width="7.700" height="10.800" rx="1.200" fill="#fff"/>
<rect x="13.800" y="14.400" width="4.300" height="7.600" rx="0.500" fill="#e9b361"/>
</svg>
<div class="abs" style="left:2px;top:225px;width:31px;height:30px;border-radius:4px;background:#ffecb5;"></div>
<svg class="ic" style="left:4px;top:229px" width="26" height="23.5" preserveAspectRatio="none" viewBox="0 0 32 29">
<path d="M2 0.600h28a1.600 1.600 0 0 1 1.600 1.600V22.600a1.600 1.600 0 0 1-1.600 1.600h-4l-1.200 3.600H12.600l-.6-1H2A1.600 1.600 0 0 1 .4 25.200V2.200A1.600 1.600 0 0 1 2 .6z" fill="#fff" stroke="#5a5a5a" stroke-width="0.900"/>
<path d="M2 0.200h28a1.800 1.800 0 0 1 1.800 1.800v2.800H.2V2A1.800 1.800 0 0 1 2 .2z" fill="#4f2ea8"/>
<path d="M3.600 7.300h24.800" stroke="#555" stroke-width="1.500" stroke-linecap="round"/>
<g stroke="#ababab" stroke-width="1.700"><path d="M3.400 11.300h7.400M12.400 11.300h7.400M3.400 14.900h7.400M12.400 14.900h7.400M3.400 18.500h7.400M12.400 18.500h7.400"/></g>
<g stroke="#4f2ea8" stroke-width="1.900" stroke-linecap="round"><path d="M22.200 11.300h6M22.200 14.900h6M22.200 18.500h6"/></g>
<path d="M11.600 27.600l1-2.400h5.400l-.8 2.400zM18.600 27.600l.8-2.400h6l-1 2.400z" fill="#fff" stroke="#5a5a5a" stroke-width="0.700"/>
</svg>

<!-- ===== formula bar ===== -->
<div class="abs" style="left:40px;top:166px;width:43px;height:18px;border:1px solid #d3c8ee;"></div>
<div class="t" style="left:43px;top:170px;font-size:11px;color:#1e1e1e;">2</div>
<svg class="ic" style="left:90px;top:169px" width="14" height="14" viewBox="0 0 14 14"><path d="M1.800 1.700l10.400 10.400M12.200 1.700L1.800 12.100" stroke="#8a8a8a" stroke-width="2.700"/></svg>
<svg class="ic" style="left:114px;top:169px" width="14" height="14" viewBox="0 0 14 14"><path d="M1.600 6.600l4 4 6.800-7.800" fill="none" stroke="#8f8f8f" stroke-width="2.700"/></svg>
<div class="t" style="left:137px;top:167.500px;font-size:17.500px;font-weight:bold;color:#787878;-webkit-text-stroke:0.400px #787878;--sx:1;">fx</div>
<div class="abs" style="left:159px;top:166px;width:1575px;height:18px;border:1px solid #d3c8ee;"></div>

<!-- ===== grid ===== -->
<div class="abs" style="left:35px;top:259px;width:1656px;height:27px;background:#5c33ad;"></div>
<div class="abs" style="left:35px;top:285px;width:1656px;height:1px;background:#5029a8;"></div>
<div class="abs" style="left:35px;top:337px;width:1655px;height:50px;background:#f6e9e6;"></div>
<div class="abs" style="left:35px;top:388px;width:1655px;height:39px;background:#f6e9e6;"></div>
<div class="abs" style="left:35px;top:430px;width:1653px;height:42px;background:#ffebb0;"></div>
<div class="abs" style="left:35px;top:475px;width:1655px;height:21px;background:#ece8fc;"></div>
<div class="hl" style="left:34px;top:193px;width:1684px;background:#d3c8ee;"></div>
<div class="hl" style="left:680px;top:218px;width:1010px;background:#d3c8ee;"></div>
<div class="hl" style="left:34px;top:258px;width:1684px;background:#d3c8ee;"></div>
<div class="hl" style="left:34px;top:336px;width:1657px;background:#d3c8ee;"></div>
<div class="hl" style="left:34px;top:387px;width:1657px;background:#d3c8ee;"></div>
<div class="hl" style="left:34px;top:496px;width:1657px;background:#d3c8ee;"></div>
<div class="vl" style="left:34px;top:193px;height:816px;background:#d3c8ee;"></div>
<div class="vl" style="left:114px;top:193px;height:65px;background:#d3c8ee;"></div>
<div class="vl" style="left:325px;top:193px;height:65px;background:#d3c8ee;"></div>
<div class="vl" style="left:575px;top:193px;height:65px;background:#d3c8ee;"></div>
<div class="vl" style="left:680px;top:193px;height:65px;background:#d3c8ee;"></div>
<div class="vl" style="left:1010px;top:193px;height:65px;background:#d3c8ee;"></div>
<div class="vl" style="left:1690px;top:193px;height:65px;background:#d3c8ee;"></div>
<div class="vl" style="left:770px;top:218px;height:40px;background:#d3c8ee;"></div>
<div class="vl" style="left:890px;top:218px;height:40px;background:#d3c8ee;"></div>
<div class="vl" style="left:1170px;top:218px;height:40px;background:#d3c8ee;"></div>
<div class="vl" style="left:1290px;top:218px;height:40px;background:#d3c8ee;"></div>
<div class="vl" style="left:1450px;top:218px;height:40px;background:#d3c8ee;"></div>
<div class="vl" style="left:1570px;top:218px;height:40px;background:#d3c8ee;"></div>
<div class="vl" style="left:114px;top:288px;height:208px;background:#d3c8ee;"></div>
<div class="vl" style="left:325px;top:288px;height:208px;background:#d3c8ee;"></div>
<div class="vl" style="left:575px;top:288px;height:187px;background:#d3c8ee;"></div>
<div class="vl" style="left:680px;top:288px;height:187px;background:#d3c8ee;"></div>
<div class="vl" style="left:770px;top:288px;height:187px;background:#d3c8ee;"></div>
<div class="vl" style="left:890px;top:288px;height:187px;background:#d3c8ee;"></div>
<div class="vl" style="left:1010px;top:288px;height:187px;background:#d3c8ee;"></div>
<div class="vl" style="left:1170px;top:288px;height:208px;background:#d3c8ee;"></div>
<div class="vl" style="left:1290px;top:288px;height:208px;background:#d3c8ee;"></div>
<div class="vl" style="left:1450px;top:288px;height:208px;background:#d3c8ee;"></div>
<div class="vl" style="left:1570px;top:288px;height:208px;background:#d3c8ee;"></div>
<div class="vl" style="left:1690px;top:288px;height:208px;background:#d3c8ee;"></div>
<div class="vl" style="left:1570px;top:259px;height:27px;background:#cbbcf0;"></div>
<div class="vl" style="left:1690px;top:259px;height:27px;background:#5c33ad;"></div>
<div class="t th" style="left:75px;top:226px;">№ п.п.</div>
<div class="t th l" style="left:121px;top:226px;">Обоснование</div>
<div class="t th" style="left:450.5px;top:226px;">Наименование</div>
<div class="t th" style="left:628px;top:226px;">Ед. изм.</div>
<div class="t th" style="left:846px;top:206px;">Количество</div>
<div class="t th" style="left:1351px;top:206px;">Сметная стоимость, руб</div>
<div class="t th" style="left:726px;top:239px;">на ед.</div>
<div class="t th" style="left:831px;top:239px;">коэффициенты</div>
<div class="t th" style="left:951px;top:239px;">всего с учетом<br>коэффициентов</div>
<div class="t th" style="left:1091px;top:239px;">на единицу изм. в<br>базисном уровне цен</div>
<div class="t th" style="left:1231px;top:239px;">индекс</div>
<div class="t th" style="left:1371px;top:239px;">на единицу изм. в<br>текущем уровне цен</div>
<div class="t th" style="left:1511px;top:239px;">коэффициенты</div>
<div class="t th" style="left:1631px;top:239px;">всего в текущем</div>
<svg class="ic" style="left:44px;top:268.600px" width="12" height="8" viewBox="0 0 12 8"><path d="M1.400 1.300L6 6.300l4.600-5" fill="none" stroke="#fff" stroke-width="1.400"/></svg>
<div class="t c" style="left:60px;top:265px;color:#fff;font-size:11.500px;--sx:.977;">Раздел 1.</div>
<div class="t n r" style="left:1686px;top:263px;color:#fff;font-weight:bold;">3 651 335,58</div>
<svg class="ic" style="left:41px;top:291px" width="8" height="12" viewBox="0 0 8 12"><path d="M4.600 0L0.800 6.600h2.600L2.200 12 7.200 4.800H4.200L6.400 0z" fill="#d2452f"/></svg>
<div class="t n r" style="left:104px;top:291px;">1</div>
<div class="t n" style="left:125.5px;top:291px;--sx:.96;">10-01-001-01</div>
<div class="t c" style="left:120px;top:316px;color:#a3a3a3;font-weight:bold;font-size:11.500px;--sx:.98;-webkit-text-stroke:0.300px #a3a3a3;">К<span style="font-size:8.500px;position:relative;top:2.500px;">п</span></div>
<svg class="ic" style="left:47px;top:318px" width="8" height="11" viewBox="0 0 8 11"><path d="M1.300 1.300l4.400 4.500L1.300 10.300" fill="none" stroke="#4527a0" stroke-width="1.500"/></svg>
<svg class="ic" style="left:69px;top:318px" width="8" height="11" viewBox="0 0 8 11"><path d="M1.300 1.300l4.400 4.500L1.300 10.300" fill="none" stroke="#4527a0" stroke-width="1.500"/></svg>
<div class="t c" style="left:336px;top:291px;--sx:0.991;">Укрупнительная сборка и установка</div>
<div class="t c" style="left:336px;top:304px;--sx:0.993;">конструкций арок и ферм сегментных с</div>
<div class="t c" style="left:336px;top:317px;--sx:0.996;">металлической затяжкой пролетом: 18 м</div>
<div class="t c" style="left:586px;top:291px;">шт</div>
<div class="t n r" style="left:761px;top:291px;">5,00</div>
<div class="t n r" style="left:1006px;top:291px;">5,00</div>
<div class="t n r" style="left:1446px;top:291px;">730 267,12</div>
<div class="t n r" style="left:1686px;top:291px;">3 651 335,58</div>
<svg class="ic" style="left:40px;top:341px" width="12" height="10" viewBox="0 0 12 10"><path d="M0.700 0.200v9h10.200" fill="none" stroke="#6a6a72" stroke-width="1.400"/><path d="M3.400 2.200v5.400" stroke="#d2452f" stroke-width="1.600" stroke-linecap="round"/><path d="M6 1.100v6.500" stroke="#e8a010" stroke-width="2" stroke-linecap="round"/><path d="M8.800 4v3.600" stroke="#128a12" stroke-width="2" stroke-linecap="round"/></svg>
<svg class="ic" style="left:40px;top:355px" width="12" height="12" viewBox="0 0 12 12"><path d="M4.600 10.500A5.100 5.100 0 0 1 2.300 1.600M6.400 0.600A5.100 5.100 0 0 1 9 9.400" fill="none" stroke="#128a12" stroke-width="1.300"/><path d="M0.500 0.500L4.100 0.300 3.500 3.400zM6.900 8.200L11 9 7.500 11.300z" fill="#128a12"/><path d="M2.700 5.600L4.500 7.300 7.800 4.400" fill="none" stroke="#128a12" stroke-width="1.300"/></svg>
<div class="t n r g" style="left:104.5px;top:341px;">1.1</div>
<div class="t n r g" style="left:315.5px;top:341px;">07.2.07.13-0015</div>
<svg class="ic" style="left:68px;top:369px" width="8" height="11" viewBox="0 0 8 11"><path d="M1.300 1.300l4.400 4.500L1.300 10.300" fill="none" stroke="#4527a0" stroke-width="1.500"/></svg>
<div class="t c g" style="left:336px;top:341px;--sx:0.995;">Расстрел металлический из балки</div>
<div class="t c g" style="left:336px;top:354px;--sx:0.983;">коробчатого сечения, сталь С255</div>
<div class="t c g" style="left:586px;top:341px;">т</div>
<div class="t n r g" style="left:761px;top:341px;">4,00</div>
<div class="t n r g" style="left:1006px;top:341px;">20,00</div>
<div class="t n r g" style="left:1166px;top:341px;">116 809,06</div>
<div class="t n r g" style="left:1286px;top:341px;">1,35</div>
<div class="t n r g" style="left:1446px;top:341px;">157 692,23</div>
<div class="t n r g" style="left:1686px;top:341px;">3 153 844,60</div>
<svg class="ic" style="left:40px;top:392.5px" width="12" height="12" viewBox="0 0 12 12"><path d="M4.600 10.500A5.100 5.100 0 0 1 2.300 1.600M6.400 0.600A5.100 5.100 0 0 1 9 9.400" fill="none" stroke="#128a12" stroke-width="1.300"/><path d="M0.500 0.500L4.100 0.300 3.500 3.400zM6.900 8.200L11 9 7.500 11.300z" fill="#128a12"/><path d="M2.700 5.600L4.500 7.300 7.800 4.400" fill="none" stroke="#128a12" stroke-width="1.300"/></svg>
<div class="t n r g" style="left:104.5px;top:392px;">1.2</div>
<div class="t n r g" style="left:315.5px;top:392px;">11.2.06.02-0048</div>
<svg class="ic" style="left:68px;top:411px" width="8" height="11" viewBox="0 0 8 11"><path d="M1.300 1.300l4.400 4.500L1.300 10.300" fill="none" stroke="#4527a0" stroke-width="1.500"/></svg>
<div class="t c g" style="left:336px;top:392px;--sx:0.979;">Балка клееная хвойных пород (ель, сосна),</div>
<div class="t c g" style="left:336px;top:405px;--sx:0.993;">размеры 150х150 мм</div>
<div class="t c g" style="left:586px;top:392px;">м3</div>
<div class="t n r g" style="left:761px;top:392px;">2,00</div>
<div class="t n r g" style="left:1006px;top:392px;">10,00</div>
<div class="t n r g" style="left:1166px;top:392px;">30 375,66</div>
<div class="t n r g" style="left:1446px;top:392px;">30 375,66</div>
<div class="t n r g" style="left:1686px;top:392px;">303 756,60</div>
<div class="t n r" style="left:104.5px;top:433px;">2</div>
<div class="t n" style="left:124px;top:433px;--sx:.977;">ТЦ_20.2.08.09_77_773456789_ 16.11.20</div>
<svg class="ic" style="left:47px;top:455px" width="8" height="11" viewBox="0 0 8 11"><path d="M1.300 1.300l4.400 4.500L1.300 10.300" fill="none" stroke="#4527a0" stroke-width="1.500"/></svg>
<div class="t c" style="left:332.5px;top:432px;--sx:0.978;">Коробка квадратная IP55, 105</div>
<div class="t c" style="left:332.5px;top:445px;--sx:1.000;">мм*105 мм*55 мм, 7 вводов</div>
<div class="t c" style="left:586px;top:433px;">шт</div>
<div class="t n r" style="left:761px;top:433px;">1,00</div>
<div class="t n r" style="left:1006px;top:433px;">1,00</div>
<div class="t n r" style="left:1442px;top:433px;">94,50</div>
<div class="t n r" style="left:1679px;top:432px;">94,50</div>
<div class="abs" style="left:32.500px;top:426.700px;width:1651px;height:42.500px;border:3px solid #fc0000;border-radius:1px;"></div>
<svg class="ic" style="left:47px;top:479px" width="8" height="11" viewBox="0 0 8 11"><path d="M1.300 1.300l4.400 4.500L1.300 10.300" fill="none" stroke="#4527a0" stroke-width="1.500"/></svg>
<div class="t c" style="left:336px;top:476.5px;">Всего</div>
<div class="t n r" style="left:1686px;top:477px;font-weight:bold;">3 651 430,08</div>

<!-- ===== right panel ===== -->
<div class="vl" style="left:1717px;top:193px;height:817px;"></div>
<div class="hl" style="left:1717px;top:193px;width:25px;"></div>
<div class="hl" style="left:1717px;top:265px;width:25px;"></div>
<div class="hl" style="left:1717px;top:355px;width:25px;"></div>
<div class="t" style="left:1732px;top:229.500px;font-size:12.200px;color:#1e1e1e;transform-origin:50% 50%;transform:translate(-50%,-50%) rotate(90deg);">Расчет</div>
<div class="t" style="left:1732px;top:310.500px;font-size:12.200px;color:#1e1e1e;transform-origin:50% 50%;transform:translate(-50%,-50%) rotate(90deg);">Структура</div>

<!-- ===== bottom bar ===== -->
<div class="hl" style="left:34px;top:1009px;width:1708px;"></div>
<div class="abs" style="left:34px;top:1010px;width:200px;height:30px;background:#ffebb0;"></div>
<div class="abs" style="left:34px;top:1010px;width:200px;height:4px;background:#ff9a00;"></div>
<svg class="ic" style="left:57px;top:1015px" width="20" height="20" viewBox="0 0 20 20">
<path d="M3.600 9.800L9.700 4.900l6.100 4.900" fill="none" stroke="#e8bd7a" stroke-width="1"/>
<path d="M2.800 9.800h13.800" stroke="#e8bd7a" stroke-width="1.100"/>
<path d="M3.400 9.800v7.600M7.400 9.800v7.600M12 9.800v7.600M16 9.800v7.600" stroke="#e8bd7a" stroke-width="1.400"/>
<path d="M9.700 5.600v4" stroke="#efd2a0" stroke-width="1"/>
<path d="M2.300 18.200h15.700" stroke="#7d7d7d" stroke-width="1.100"/>
<path d="M1.400 9.500L9.700 1.500 18.600 9.200" fill="none" stroke="#4f2ea8" stroke-width="1.400"/>
</svg>
<div class="t" style="left:82.500px;top:1017.800px;font-size:13px;font-weight:bold;color:#1e1e1e;--sx:1.015;">Подготовительн...</div>
<svg class="ic" style="left:216px;top:1019px" width="12" height="12" viewBox="0 0 12 12"><path d="M1.200 1.200l9.600 9.600M10.800 1.200L1.200 10.800" stroke="#1e1e1e" stroke-width="1.500"/></svg>

<svg class="ic" style="left:257px;top:1016px" width="20" height="18" viewBox="0 0 20 18">
<path d="M1 10.800l2.800-2.800 4.400 4.200-3 3.200z" fill="#e9b361"/>
<circle cx="9.300" cy="6.500" r="4.700" fill="#fff" stroke="#4a25b0" stroke-width="1.500"/>
<path d="M6.200 5.200l1.600-1.400h3.400v3.400l-1.800 1.800H6.800z" fill="#e9b361"/>
<rect x="8.800" y="5" width="1.100" height="1.100" fill="#fff"/>
<path d="M12.800 10.200l5.600 5.400" stroke="#4a25b0" stroke-width="1.700" stroke-linecap="round"/>
</svg>
<div class="t" style="left:282.500px;top:1017.600px;font-size:13px;color:#333;--sx:1.07;">Конъюнктурный а...</div>
<svg class="ic" style="left:416px;top:1019px" width="12" height="12" viewBox="0 0 12 12"><path d="M1.200 1.200l9.600 9.600M10.800 1.200L1.200 10.800" stroke="#1e1e1e" stroke-width="1.500"/></svg>

<div class="vl" style="left:1309px;top:1010px;height:29px;background:#dcdce2;"></div>
<div class="t" style="left:1322.500px;top:1016.500px;font-size:13px;font-weight:bold;color:#1e1e1e;--sx:.988;">Всего</div>
<div class="t" style="left:1378px;top:1017.500px;font-size:13px;color:#1e1e1e;--sx:1.057;">3 651 435,08 ₽</div>


</div></div>
</body>
</html>
